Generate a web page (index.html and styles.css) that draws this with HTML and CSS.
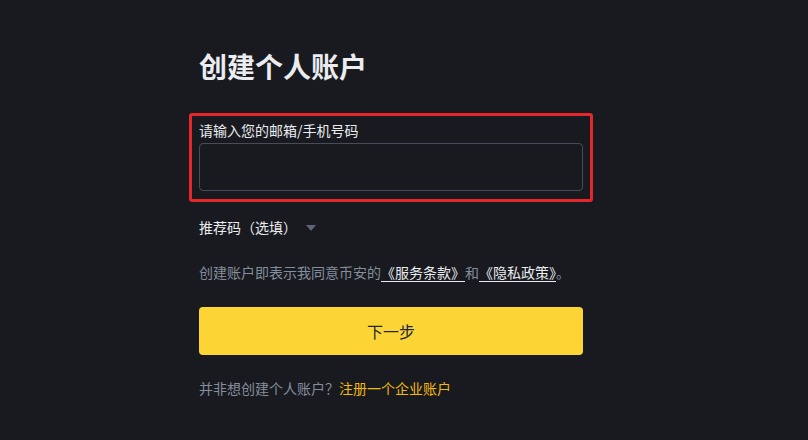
FILE: index.html
```html
<!DOCTYPE html>
<html lang="zh-CN">
<head>
<meta charset="utf-8">
<title>创建个人账户</title>
<link rel="stylesheet" href="styles.css">
</head>
<body>
<main class="form">
  <h1 class="title">创建个人账户</h1>
  <div class="field-highlight">
    <label class="field-label" for="account">请输入您的邮箱/手机号码</label>
    <input class="field-input" id="account" type="text">
  </div>
  <div class="referral">
    <span>推荐码（选填）</span>
    <svg class="caret" width="10" height="6" viewBox="0 0 10 6"><path d="M0 0h10L5 6z" fill="#5e6673"/></svg>
  </div>
  <p class="terms">创建账户即表示我同意币安的<a class="terms-link" href="#">《服务条款》</a>和<a class="terms-link" href="#">《隐私政策》</a>。</p>
  <button class="next-btn" type="button">下一步</button>
  <p class="footer">并非想创建个人账户？<a class="footer-link" href="#">注册一个企业账户</a></p>
</main>
</body>
</html>
```

FILE: styles.css
```css
html, body {
  margin: 0;
  padding: 0;
  background: #181a20;
}
body {
  width: 808px;
  height: 440px;
  overflow: hidden;
  font-family: "Noto Sans CJK SC", "Noto Sans", sans-serif;
  color: #eaecef;
}
.form {
  width: 384px;
  margin-left: 199px;
  padding-top: 48px;
  display: flex;
  flex-direction: column;
}
.title {
  margin: 0;
  font-size: 28px;
  line-height: 36px;
  font-weight: 700;
  color: #eaecef;
}
.field-highlight {
  margin: 29px -10px 0;
  padding: 4px 7px 8px;
  border: 3px solid #e5262b;
  border-radius: 3px;
  display: flex;
  flex-direction: column;
}
.field-label {
  font-size: 14px;
  line-height: 20px;
  color: #eaecef;
  margin-bottom: 3px;
}
.field-input {
  box-sizing: border-box;
  height: 48px;
  width: 100%;
  margin: 0;
  background: transparent;
  border: 1px solid #474d57;
  border-radius: 4px;
  outline: none;
  color: #eaecef;
  font: inherit;
}
.referral {
  margin-top: 15px;
  display: flex;
  align-items: center;
  gap: 9px;
  font-size: 14px;
  line-height: 20px;
  color: #eaecef;
}
.caret {
  display: block;
  margin-top: 1px;
}
.terms {
  margin: 25px 0 0;
  font-size: 14px;
  line-height: 20px;
  color: #848e9c;
}
.terms-link {
  color: #eaecef;
  text-decoration: underline;
  text-underline-offset: 3px;
}
.next-btn {
  margin-top: 25px;
  height: 48px;
  width: 100%;
  border: none;
  border-radius: 4px;
  background: #fcd535;
  color: #202630;
  font-family: inherit;
  font-size: 16px;
  font-weight: 400;
  padding: 0;
}
.footer {
  margin: 23px 0 0;
  font-size: 14px;
  line-height: 20px;
  color: #848e9c;
}
.footer-link {
  color: #f0b90b;
  text-decoration: none;
}
```
